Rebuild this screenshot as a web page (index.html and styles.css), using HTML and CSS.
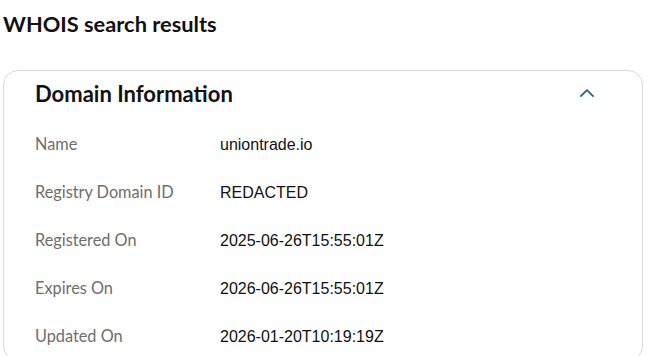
FILE: index.html
```html
<!DOCTYPE html>
<html lang="en">
<head>
<meta charset="utf-8">
<link rel="stylesheet" href="styles.css">
</head>
<body>
<main class="page">
  <h1 class="title">WHOIS search results</h1>
  <section class="card">
    <div class="card-head">
      <h2 class="card-title">Domain Information</h2>
      <button class="toggle" aria-label="Collapse">
        <svg width="14" height="8" viewBox="0 0 14 8"><path d="M1 7 L7 1.2 L13 7" fill="none" stroke="#1b6e77" stroke-width="1.8" stroke-linecap="square"/></svg>
      </button>
    </div>
    <dl class="rows">
      <div class="row"><dt>Name</dt><dd>uniontrade.io</dd></div>
      <div class="row"><dt>Registry Domain ID</dt><dd>REDACTED</dd></div>
      <div class="row"><dt>Registered On</dt><dd>2025-06-26T15:55:01Z</dd></div>
      <div class="row"><dt>Expires On</dt><dd>2026-06-26T15:55:01Z</dd></div>
      <div class="row"><dt>Updated On</dt><dd>2026-01-20T10:19:19Z</dd></div>
    </dl>
  </section>
</main>
</body>
</html>
```
FILE: styles.css
```css
* { box-sizing: border-box; }
html, body { margin: 0; padding: 0; background: #fff; }
body { font-family: Lato, "Open Sans", sans-serif; color: #111; }
.page { padding: 10px 4px 0 3px; }
.title { margin: 0; font-size: 21.8px; font-weight: 700; line-height: 28px; color: #111; }
.card { margin-top: 32px; border: 1px solid #d6d9dc; border-radius: 15px; padding: 0 31px; min-height: 290px; }
.card-head { display: flex; align-items: center; justify-content: space-between; height: 44px; }
.card-title { margin: 0; font-size: 22px; font-weight: 700; color: #111; }
.toggle { border: 0; background: none; padding: 0; margin-right: 17px; width: 14px; height: 8px; display: flex; }
.rows { margin: 5px 0 0; }
.row { display: flex; align-items: baseline; height: 48px; padding-top: 14px; }
.row dt { width: 185px; font-size: 16.3px; line-height: 20px; color: #6e6e6e; }
.row dd { margin: 0; font-family: "Liberation Sans", Arial, sans-serif; font-size: 16px; line-height: 20px; color: #111; }
```
